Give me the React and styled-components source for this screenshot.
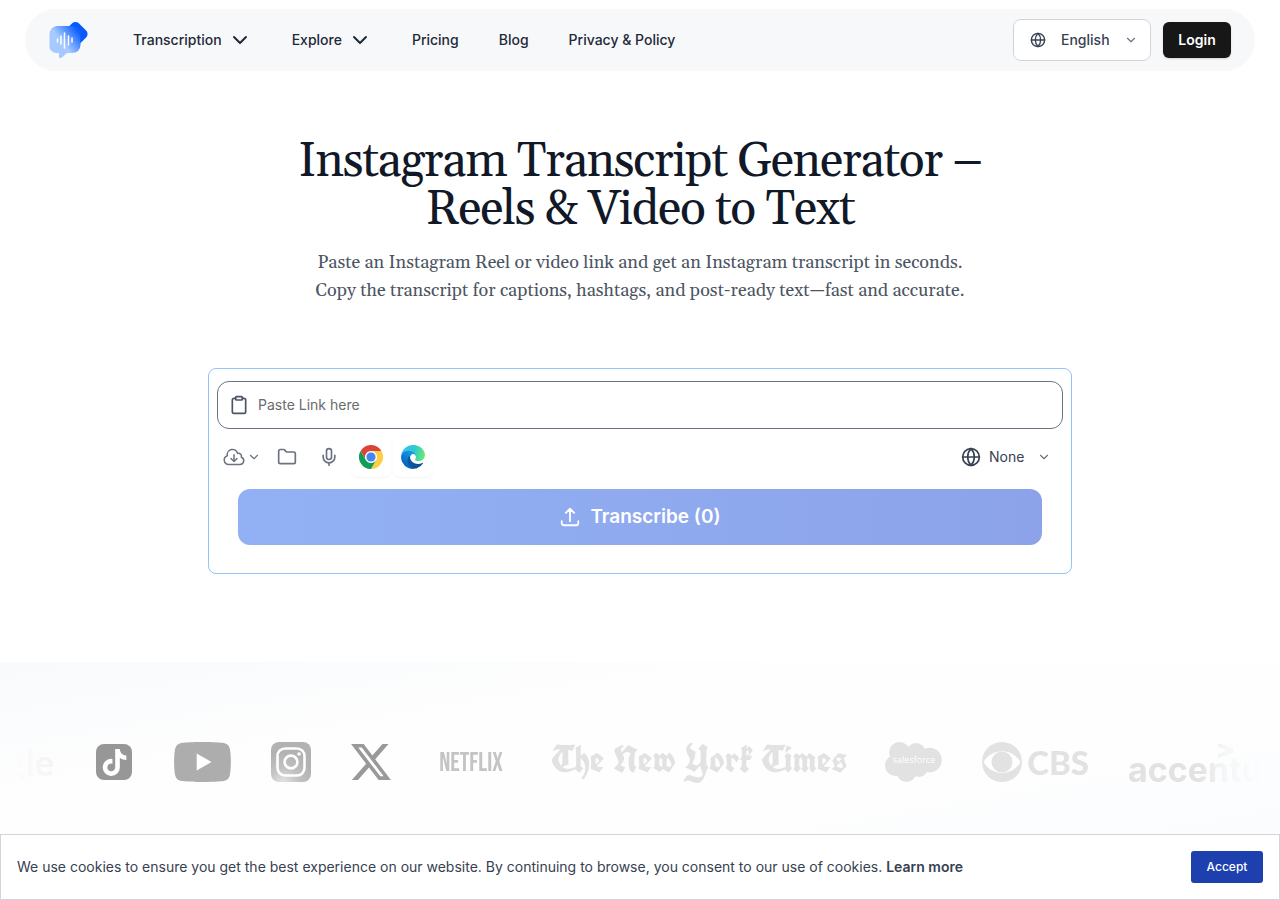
import styled, { createGlobalStyle } from "styled-components";
import { ChevronDown, Folder, Mic, Clipboard, Globe } from "lucide-react";
import { FaTiktok } from "react-icons/fa6";
import { HiOutlineArrowUpTray, HiOutlineCloudArrowDown } from "react-icons/hi2";

const GlobalStyle = createGlobalStyle`
  *, *::before, *::after {
    box-sizing: border-box;
  }

  body {
    margin: 0;
    background: #fff;
    color: #1f2937;
    font-family: Inter, "Liberation Sans", sans-serif;
    font-size: 14px;
    line-height: 20px;
  }

  button, input, select {
    font: inherit;
  }
`;

const Page = styled.div`
  min-height: 100vh;
  padding-top: 9px;
  overflow: hidden;
`;

const Header = styled.header`
  display: flex;
  align-items: center;
  justify-content: space-between;
  height: 62px;
  margin: 0 25px;
  padding: 0 24px;
  border-radius: 31px;
  background: #f7f8fa;
`;

const Nav = styled.nav`
  display: flex;
  align-items: center;
  gap: 40px;
`;

const Brand = styled.a`
  display: flex;
  margin-right: 4px;
`;

const NavLink = styled.a`
  color: #1f2937;
  font-weight: 500;
  text-decoration: none;
`;

const NavButton = styled.button`
  display: flex;
  align-items: center;
  gap: 6px;
  padding: 0;
  border: 0;
  background: none;
  color: #1f2937;
  font-weight: 500;
  cursor: pointer;
`;

const Actions = styled.div`
  display: flex;
  align-items: center;
  gap: 12px;
`;

const SelectBox = styled.label`
  display: flex;
  align-items: center;
  gap: ${({ $gap }) => $gap}px;
  height: ${({ $bordered }) => ($bordered ? 42 : 36)}px;
  padding: 0 12px 0 16px;
  border: ${({ $bordered }) => ($bordered ? "1px solid #d1d5db" : "0")};
  border-radius: 8px;
  background: #fff;
  color: #374151;
`;

const Select = styled.select`
  width: ${({ $width }) => $width}px;
  padding: 0;
  border: 0;
  outline: 0;
  appearance: none;
  background: none;
  color: #374151;
  font-weight: ${({ $weight }) => $weight ?? 500};
`;

const SelectArrow = styled(ChevronDown)`
  color: #6b7280;
`;

const LoginButton = styled.button`
  width: 68px;
  height: 36px;
  padding: 0;
  border: 0;
  border-radius: 6px;
  background: #171717;
  box-shadow: 0 1px 2px rgba(0, 0, 0, 0.15);
  color: #fff;
  font-weight: 600;
  cursor: pointer;
`;

const Hero = styled.section`
  display: flex;
  flex-direction: column;
  align-items: center;
  padding: 67px 16px 88px;
  text-align: center;
`;

const Title = styled.h1`
  max-width: 768px;
  margin: 0;
  color: #111827;
  font-family: Georgia, Gelasio, "Liberation Serif", serif;
  font-size: 48px;
  font-weight: 400;
  line-height: 48px;
  letter-spacing: -0.025em;
`;

const Subtitle = styled.p`
  max-width: 672px;
  margin: 15px 0 63px;
  color: #4b5563;
  font-family: Georgia, Gelasio, "Liberation Serif", serif;
  font-size: 18px;
  line-height: 28px;
`;

const Card = styled.form`
  width: 100%;
  max-width: 864px;
  padding: 12px 8px 28px;
  border: 1px solid #93c5fd;
  border-radius: 8px;
`;

const LinkField = styled.label`
  display: flex;
  align-items: center;
  gap: 9px;
  height: 48px;
  padding: 0 11px;
  border: 1px solid #6b7280;
  border-radius: 12px;
  color: #4b5563;
`;

const LinkInput = styled.input`
  flex: 1;
  padding: 0;
  border: 0;
  outline: 0;
  background: none;

  &::placeholder {
    color: #6b6b6b;
  }
`;

const Toolbar = styled.div`
  display: flex;
  align-items: center;
  justify-content: space-between;
  height: 40px;
  margin: 8px 0 12px;
`;

const Tools = styled.div`
  display: flex;
  align-items: center;
  gap: 2px;
`;

const ToolButton = styled.button`
  display: flex;
  align-items: center;
  justify-content: center;
  gap: 1px;
  width: ${({ $wide }) => ($wide ? 48 : 40)}px;
  height: 40px;
  padding: 0;
  border: 0;
  border-radius: 8px;
  background: #fff;
  box-shadow: ${({ $raised }) => ($raised ? "0 1px 2px rgba(0, 0, 0, 0.05)" : "none")};
  color: #6b7280;
  cursor: pointer;
`;

const TranscribeButton = styled.button`
  display: flex;
  align-items: center;
  justify-content: center;
  gap: 9px;
  width: calc(100% - 42px);
  height: 56px;
  margin: 0 auto;
  border: 0;
  border-radius: 12px;
  background: linear-gradient(90deg, #92b1f5, #8ca3e9);
  color: #fff;
  font-size: 19px;
  font-weight: 600;
`;

const Brands = styled.section`
  height: 240px;
  padding: 68px 16px 0;
  background: linear-gradient(170deg, #f8fafc 0%, #fefefe 30%, #fefefe 60%, #f8fbff 100%);
`;

const LogoRow = styled.div`
  display: flex;
  align-items: center;
  gap: 40px;
  height: 64px;
  overflow: hidden;
  mask-image: linear-gradient(
    90deg,
    transparent,
    rgba(0, 0, 0, 0.25) 40px,
    #000 64px,
    #000 calc(100% - 64px),
    rgba(0, 0, 0, 0.25) calc(100% - 40px),
    transparent
  );

  > * {
    flex-shrink: 0;
  }
`;

const Wordmark = styled.span`
  width: ${({ $width }) => $width}px;
  color: ${({ $color }) => $color ?? "#e2e2e2"};
  font-family: ${({ $font }) => $font};
  font-size: ${({ $size }) => $size}px;
  font-weight: ${({ $weight }) => $weight ?? 700};
  line-height: 40px;
  text-align: center;
  white-space: nowrap;
`;

const LogoEnd = styled(Wordmark)`
  display: flex;
  justify-content: flex-end;
`;

const NetflixMark = styled(Wordmark)`
  padding-top: 4px;
`;

const TimesMark = styled(Wordmark)`
  padding-bottom: 6px;
`;

const LogoPair = styled.span`
  display: flex;
  align-items: center;
  justify-content: space-between;
  width: 107px;
`;

const TikTokTile = styled.span`
  display: grid;
  place-items: center;
  width: 36px;
  height: 36px;
  margin: 0 2px;
  border-radius: 8px;
  background: #979797;
  color: #fff;
`;

const CookieBar = styled.aside`
  position: fixed;
  right: 0;
  bottom: 0;
  left: 0;
  display: flex;
  align-items: center;
  justify-content: space-between;
  padding: 16px;
  border: 1px solid #d1d5db;
  background: #fff;
`;

const CookieText = styled.p`
  margin: 0;
  color: #374151;
`;

const LearnMore = styled.a`
  color: #374151;
  font-weight: 600;
  text-decoration: none;
`;

const AcceptButton = styled.button`
  width: 72px;
  height: 32px;
  padding: 0;
  border: 0;
  border-radius: 3px;
  background: #1e40af;
  color: #fff;
  font-size: 12px;
  font-weight: 500;
`;

const BrandLogo = () => (
  <svg width="40" height="40" viewBox="0 0 40 40" aria-hidden="true">
    <defs>
      <linearGradient id="bubble" x1="8" y1="32" x2="31" y2="14" gradientUnits="userSpaceOnUse">
        <stop offset="0.35" stopColor="#a6caff" />
        <stop offset="1" stopColor="#1262ff" />
      </linearGradient>
    </defs>
    <rect x="16.500" y="4" width="20" height="20" rx="5" fill="#0758ff" transform="rotate(45 26.500 14)" />
    <path
      d="M8 6h16a7.500 7.500 0 0 1 7.500 8v11a8 8 0 0 1-8 8H18l-5 4.500q-3 2-3-1V33H8a7 7 0 0 1-7.500-8V14A8 8 0 0 1 8 6Z"
      fill="url(#bubble)"
    />
    <path
      d="M8.500 19v3M12 16v8M15.500 13v15M19.500 16v9M23 18v4"
      stroke="#fff"
      strokeWidth="1.500"
      strokeLinecap="round"
    />
  </svg>
);

const ChromeLogo = () => (
  <svg width="24" height="24" viewBox="0 0 48 48" aria-hidden="true">
    <path d="M3.200 12A24 24 0 0 1 44.800 12H24a12 12 0 0 0-10.400 18Z" fill="#db4437" />
    <path d="M44.800 12A24 24 0 0 1 24 48L34.400 30A12 12 0 0 0 24 12Z" fill="#ffcd40" />
    <path d="M24 48A24 24 0 0 1 3.200 12L13.600 30A12 12 0 0 0 34.400 30Z" fill="#0f9d58" />
    <circle cx="24" cy="24" r="11" fill="#f1f1f1" />
    <circle cx="24" cy="24" r="9" fill="#4285f4" />
  </svg>
);

const EdgeLogo = () => (
  <svg width="24" height="24" viewBox="4 5 257 256" aria-hidden="true">
    <defs>
      <linearGradient id="edgeDark" x1="63" y1="178" x2="241" y2="178" gradientUnits="userSpaceOnUse">
        <stop stopColor="#0c59a4" />
        <stop offset="1" stopColor="#114a8b" />
      </linearGradient>
      <linearGradient id="edgeBlue" x1="157" y1="100" x2="46" y2="221" gradientUnits="userSpaceOnUse">
        <stop stopColor="#1b9de2" />
        <stop offset="0.5" stopColor="#0f83d8" />
        <stop offset="1" stopColor="#0067c0" />
      </linearGradient>
      <linearGradient id="edgeGreen" x1="20" y1="70" x2="250" y2="130" gradientUnits="userSpaceOnUse">
        <stop stopColor="#35c1f1" />
        <stop offset="0.5" stopColor="#2fc8cf" />
        <stop offset="1" stopColor="#66eb6e" />
      </linearGradient>
    </defs>
    <path
      d="M235.680 195.460a93.730 93.730 0 0 1-10.540 4.710 101.870 101.870 0 0 1-35.900 6.460c-47.320 0-88.540-32.550-88.540-74.320A31.480 31.480 0 0 1 117.130 105c-42.800 1.800-53.800 46.400-53.800 72.530 0 73.880 68.090 81.370 82.760 81.370 7.910 0 19.840-2.300 27-4.560l1.310-.44A128.340 128.340 0 0 0 241 201.100a4 4 0 0 0-5.320-5.640Z"
      fill="url(#edgeDark)"
    />
    <path
      d="M110.340 246.340A79.200 79.200 0 0 1 87.600 225 80.720 80.720 0 0 1 117.130 105c3.120-1.470 8.450-4.130 15.540-4a32.350 32.350 0 0 1 25.690 13 31.880 31.880 0 0 1 6.360 18.660c0-.210 24.460-79.600-80-79.600-43.900 0-80 41.660-80 78.210a130.150 130.150 0 0 0 12.110 56 128 128 0 0 0 156.380 67.110 75.550 75.550 0 0 1-62.780-8Z"
      fill="url(#edgeBlue)"
    />
    <path
      d="M156.940 153.780c-.810 1.050-3.300 2.500-3.300 5.660 0 2.610 1.700 5.120 4.720 7.230 14.380 10 41.490 8.680 41.560 8.680A59.560 59.560 0 0 0 230.190 167a61.380 61.380 0 0 0 30.430-52.880c.260-22.410-8-37.310-11.340-43.910C228.080 28.760 182.350 5 132.610 5a128 128 0 0 0-128 126.200c.480-36.540 36.800-66.050 80-66.050 3.500 0 23.460.340 42 10.070 16.340 8.580 24.900 18.940 30.850 29.210 6.180 10.670 7.280 24.150 7.280 29.520s-2.750 13.350-7.800 19.830Z"
      fill="url(#edgeGreen)"
    />
  </svg>
);

const YouTubeLogo = () => (
  <svg width="57" height="40" viewBox="0 3.545 24 16.910" role="img" aria-label="YouTube">
    <path
      d="M23.498 6.186a3.016 3.016 0 0 0-2.122-2.136C19.505 3.545 12 3.545 12 3.545s-7.505 0-9.377.505A3.017 3.017 0 0 0 .502 6.186C0 8.070 0 12 0 12s0 3.930.502 5.814a3.016 3.016 0 0 0 2.122 2.136c1.871.505 9.376.505 9.376.505s7.505 0 9.377-.505a3.015 3.015 0 0 0 2.122-2.136C24 15.930 24 12 24 12s0-3.930-.502-5.814Z"
      fill="#adadad"
    />
    <path d="M9.545 15.568V8.432L15.818 12Z" fill="#fff" />
  </svg>
);

const InstagramLogo = () => (
  <svg width="40" height="40" viewBox="0 0 40 40" role="img" aria-label="Instagram">
    <defs>
      <radialGradient id="insta" cx="0.3" cy="1.050" r="0.800">
        <stop stopColor="#e6e6e6" />
        <stop offset="0.500" stopColor="#c2c2c2" />
        <stop offset="1" stopColor="#b2b2b2" />
      </radialGradient>
    </defs>
    <rect width="40" height="40" rx="8" fill="url(#insta)" />
    <g fill="none" stroke="#fff" strokeWidth="2.600">
      <rect x="6.500" y="6.500" width="27" height="27" rx="7.500" />
      <circle cx="20" cy="20" r="6.400" />
    </g>
    <circle cx="28" cy="12" r="1.800" fill="#fff" />
  </svg>
);

const XLogo = () => (
  <svg width="40" height="36" viewBox="1.250 2.250 21.600 19.500" role="img" aria-label="X">
    <path
      d="M18.244 2.250h3.308l-7.227 8.260 8.502 11.240H16.170l-5.214-6.817L4.990 21.750H1.680l7.730-8.835L1.254 2.250H8.080l4.713 6.231Zm-1.161 17.520h1.833L7.084 4.126H5.117Z"
      fill="#999"
    />
  </svg>
);

const SalesforceLogo = () => (
  <svg width="57" height="40" viewBox="0 0 57 40" role="img" aria-label="Salesforce">
    <g fill="#e2e2e2">
      <circle cx="14.500" cy="10.500" r="10.500" />
      <circle cx="31" cy="10.500" r="9.500" />
      <circle cx="44.500" cy="18" r="12.300" />
      <circle cx="10.500" cy="23.500" r="10.500" />
      <circle cx="21.500" cy="30" r="10" />
      <circle cx="34" cy="26" r="9" />
      <circle cx="24" cy="18" r="9" />
    </g>
    <text x="29" y="21" fill="#fff" fontFamily="Open Sans, sans-serif" fontSize="9" textAnchor="middle">
      salesforce
    </text>
  </svg>
);

const CbsEye = () => (
  <svg width="40" height="40" viewBox="0 0 40 40" aria-hidden="true">
    <circle cx="20" cy="20" r="20" fill="#e2e2e2" />
    <path d="M1.500 20C10 5.500 30 5.500 38.500 20 30 34.500 10 34.500 1.500 20Z" fill="#fff" />
    <circle cx="20" cy="20" r="10.500" fill="#e2e2e2" />
  </svg>
);

const AccentureLogo = () => (
  <svg width="172" height="40" viewBox="0 0 172 40" role="img" aria-label="Accenture">
    <path d="M89 1 104 6v5l-15 5v-4l9-3.500L89 5Z" fill="#e2e2e2" />
    <text x="-1" y="40" fill="#e2e2e2" fontFamily="Inter, sans-serif" fontSize="34" fontWeight="700">
      accenture
    </text>
  </svg>
);

export default function App() {
  return (
    <Page>
      <GlobalStyle />
      <Header>
        <Nav>
          <Brand href="#" aria-label="Home">
            <BrandLogo />
          </Brand>
          <NavButton type="button">
            Transcription
            <ChevronDown size={24} />
          </NavButton>
          <NavButton type="button">
            Explore
            <ChevronDown size={24} />
          </NavButton>
          <NavLink href="#">Pricing</NavLink>
          <NavLink href="#">Blog</NavLink>
          <NavLink href="#">Privacy & Policy</NavLink>
        </Nav>
        <Actions>
          <SelectBox $bordered $gap={15}>
            <Globe size={16} />
            <Select $width={48} aria-label="Language">
              <option>English</option>
            </Select>
            <SelectArrow size={14} />
          </SelectBox>
          <LoginButton type="button">Login</LoginButton>
        </Actions>
      </Header>

      <Hero>
        <Title>Instagram Transcript Generator – Reels & Video to Text</Title>
        <Subtitle>
          Paste an Instagram Reel or video link and get an Instagram transcript in seconds. Copy the
          transcript for captions, hashtags, and post-ready text—fast and accurate.
        </Subtitle>
        <Card>
          <LinkField>
            <Clipboard size={20} />
            <LinkInput type="text" placeholder="Paste Link here" aria-label="Link" />
          </LinkField>
          <Toolbar>
            <Tools>
              <ToolButton type="button" $wide aria-label="Import from cloud">
                <HiOutlineCloudArrowDown size={24} />
                <ChevronDown size={14} />
              </ToolButton>
              <ToolButton type="button" aria-label="Choose file">
                <Folder size={20} />
              </ToolButton>
              <ToolButton type="button" aria-label="Record">
                <Mic size={20} />
              </ToolButton>
              <ToolButton type="button" $raised aria-label="Chrome extension">
                <ChromeLogo />
              </ToolButton>
              <ToolButton type="button" $raised aria-label="Edge extension">
                <EdgeLogo />
              </ToolButton>
            </Tools>
            <SelectBox $gap={8}>
              <Globe size={20} />
              <Select $width={40} $weight={400} aria-label="Spoken language">
                <option>None</option>
              </Select>
              <SelectArrow size={14} />
            </SelectBox>
          </Toolbar>
          <TranscribeButton type="submit">
            <HiOutlineArrowUpTray size={22} strokeWidth={2} />
            Transcribe (0)
          </TranscribeButton>
        </Card>
      </Hero>

      <Brands aria-label="Trusted by">
        <LogoRow>
          <LogoEnd $width={38} $color="#d4d4d4" $size={36} $font="Lato, sans-serif">
            gle
          </LogoEnd>
          <TikTokTile>
            <FaTiktok size={27} />
          </TikTokTile>
          <YouTubeLogo />
          <InstagramLogo />
          <XLogo />
          <NetflixMark
            $width={80}
            $color="#c4c4c4"
            $size={26}
            $weight={400}
            $font='"Bebas Neue", "Oswald", "Roboto Condensed", sans-serif'
          >
            NETFLIX
          </NetflixMark>
          <TimesMark $width={294} $size={37} $font='UnifrakturCook, "Liberation Serif", serif'>
            The New York Times
          </TimesMark>
          <SalesforceLogo />
          <LogoPair>
            <CbsEye />
            <Wordmark $size={33} $weight={900} $font="Lato, sans-serif">
              CBS
            </Wordmark>
          </LogoPair>
          <AccentureLogo />
        </LogoRow>
      </Brands>

      <CookieBar>
        <CookieText>
          We use cookies to ensure you get the best experience on our website. By continuing to
          browse, you consent to our use of cookies. <LearnMore href="#">Learn more</LearnMore>
        </CookieText>
        <AcceptButton type="button">Accept</AcceptButton>
      </CookieBar>
    </Page>
  );
}
